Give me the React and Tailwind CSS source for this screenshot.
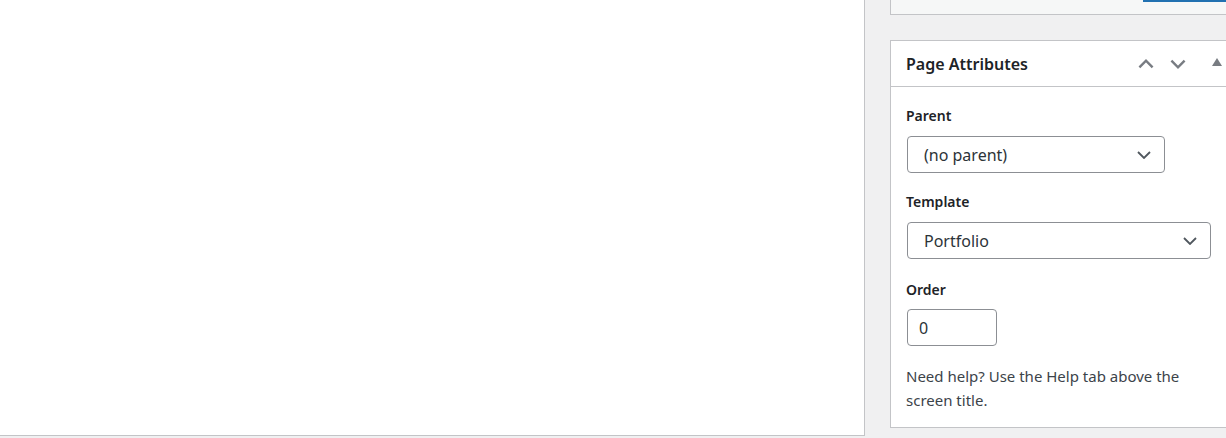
import React from 'react';

const font = { fontFamily: '"Noto Sans", "Open Sans", Arial, sans-serif' };

function Chevron({ up, className }) {
  return (
    <svg viewBox="0 0 20 20" className={className} fill="none" stroke="currentColor" strokeWidth="2.2">
      {up ? <path d="M4 13l6-6 6 6" /> : <path d="M4 7l6 6 6-6" />}
    </svg>
  );
}

function SelectBox({ value, width }) {
  return (
    <div className={`${width} h-[37px] mt-[10px] flex items-center justify-between pl-[16px] pr-[13px] border border-[#8c8f94] rounded-[4px] bg-white text-[16px] text-[#2c3338]`}>
      <span>{value}</span>
      <svg viewBox="0 0 14 8" className="w-[14px] h-[8px] text-[#50575e]" fill="none" stroke="currentColor" strokeWidth="1.8">
        <path d="M1 1l6 6 6-6" />
      </svg>
    </div>
  );
}

export default function App() {
  return (
    <div className="w-[1226px] h-[438px] bg-[#f0f0f1] flex overflow-hidden" style={font}>
      <div className="flex-none w-[865px] h-[436px] bg-white border-r border-b border-[#c3c4c7]" />

      <div className="flex-1 pl-[25px] overflow-hidden">
        {/* previous box, cut off at the top */}
        <div className="w-[380px] h-[15px] bg-[#f6f7f7] border-l border-b border-[#c3c4c7]">
          <div className="ml-[252px] h-[2px] bg-[#2271b1]" />
        </div>

        <div className="w-[380px] mt-[25px] bg-white border border-[#c3c4c7]">
          <div className="h-[46px] flex items-center border-b border-[#c3c4c7] pl-[15px]">
            <h2 className="text-[16px] font-semibold text-[#1d2327] w-[229px]">Page Attributes</h2>
            <Chevron up className="w-[22px] h-[22px] text-[#787c82]" />
            <Chevron className="w-[22px] h-[22px] text-[#787c82] ml-[10px]" />
            <svg viewBox="0 0 10 8" className="w-[10px] h-[8px] text-[#787c82] ml-[23px] -mt-[4px]" fill="currentColor">
              <path d="M5 0l5 8H0z" />
            </svg>
          </div>

          <div className="pl-[15px] pt-[19px] pb-[15px] text-[#1d2327]">
            <div className="h-[20px] leading-[20px] text-[14px] font-semibold">Parent</div>
            <div className="pl-px">
              <SelectBox value="(no parent)" width="w-[258px]" />
            </div>

            <div className="h-[20px] leading-[20px] text-[14px] font-semibold mt-[19px]">Template</div>
            <div className="pl-px">
              <SelectBox value="Portfolio" width="w-[304px]" />
            </div>

            <div className="h-[20px] leading-[20px] text-[14px] font-semibold mt-[21px]">Order</div>
            <div className="pl-px">
              <div className="w-[90px] h-[37px] mt-[9px] flex items-center pl-[11px] border border-[#8c8f94] rounded-[4px] text-[16px] text-[#2c3338]">0</div>
            </div>

            <p className="mt-[18px] w-[300px] text-[15px] leading-[24px] text-[#3c434a]">
              Need help? Use the Help tab above the screen title.
            </p>
          </div>
        </div>
      </div>
    </div>
  );
}
